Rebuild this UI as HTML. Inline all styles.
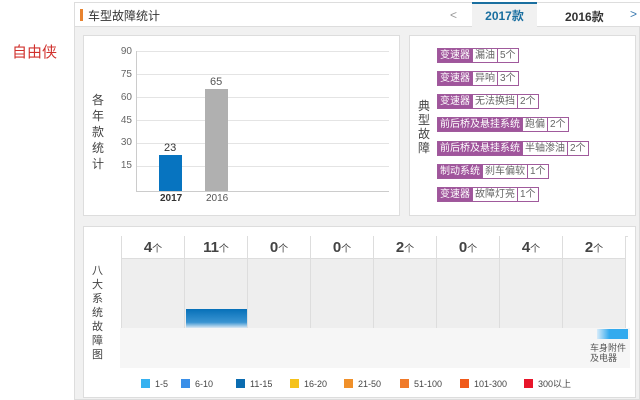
<!DOCTYPE html><html><head><meta charset="utf-8"><style>
*{margin:0;padding:0;box-sizing:border-box}
body{width:640px;height:400px;background:#fff;font-family:"Liberation Sans","Noto Sans CJK SC",sans-serif;position:relative;overflow:hidden;font-size:11px;color:#333}
.a{position:absolute}
.tag{position:absolute;left:437px;height:15px;display:flex;font-size:10px;line-height:13px}
.tag span{border:1px solid #a05a9c;padding:0 2px;background:#fff;color:#666}
.tag span.p{background:#a0559c;color:#fff}
.tag span+span{border-left:none}
.yl{position:absolute;left:112px;width:20px;text-align:right;font-size:10px;color:#666}
.gl{position:absolute;left:136px;width:253px;height:1px;background:#e4e4e4}
.col{position:absolute;top:236px;width:63px;height:132px;border-right:1px solid #ddd;background:#eee}
.col b{display:block;height:23px;background:#fff;border-bottom:1px solid #ddd;text-align:center;font-size:15px;line-height:23px;color:#444}
.col b small{font-size:10px;font-weight:normal}
.lg{position:absolute;top:379px;font-size:9px;color:#444;line-height:10px}
.lg i{display:inline-block;width:9px;height:9px;vertical-align:-1px;margin-right:5px}
</style></head><body>
<div class="a" style="left:74px;top:2px;width:566px;height:398px;background:#f1f1f1;border:1px solid #ddd"></div>
<div class="a" style="left:75px;top:3px;width:565px;height:24px;background:#fff;border-bottom:1px solid #ddd"></div>
<div class="a" style="left:80px;top:9px;width:3px;height:12px;background:#e8832f"></div>
<div class="a" style="left:88px;top:7px;font-size:12px;color:#333">车型故障统计</div>
<div class="a" style="left:12px;top:41px;font-size:15px;color:#d0312d">自由侠</div>
<div class="a" style="left:450px;top:8px;color:#999;font-size:12px">&lt;</div>
<div class="a" style="left:472px;top:2px;width:65px;height:26px;background:#f1f1f1;border-top:2px solid #1a6fa0;text-align:center;line-height:24px;font-weight:bold;color:#1a6fa0;font-size:12px">2017款</div>
<div class="a" style="left:565px;top:8px;font-weight:bold;font-size:12px;color:#333">2016款</div>
<div class="a" style="left:630px;top:7px;color:#3a7ab0;font-size:12px">&gt;</div>
<div class="a" style="left:83px;top:35px;width:317px;height:181px;background:#fff;border:1px solid #ddd"></div>
<div class="a" style="left:409px;top:35px;width:227px;height:181px;background:#fff;border:1px solid #ddd"></div>
<div class="a" style="left:83px;top:226px;width:553px;height:172px;background:#fff;border:1px solid #ddd"></div>
<div class="a" style="left:92px;top:92px;width:12px;font-size:12px;line-height:16px;color:#444">各年款统计</div>
<div class="yl" style="top:46px">90</div><div class="yl" style="top:69px">75</div><div class="yl" style="top:92px">60</div><div class="yl" style="top:115px">45</div><div class="yl" style="top:137px">30</div><div class="yl" style="top:160px">15</div>
<div class="gl" style="top:51px"></div><div class="gl" style="top:74px"></div><div class="gl" style="top:97px"></div><div class="gl" style="top:120px"></div><div class="gl" style="top:143px"></div><div class="gl" style="top:166px"></div>
<div class="a" style="left:136px;top:51px;width:1px;height:141px;background:#ccc"></div>
<div class="a" style="left:136px;top:191px;width:253px;height:1px;background:#ccc"></div>
<div class="a" style="left:159px;top:155px;width:23px;height:36px;background:#0774c0"></div>
<div class="a" style="left:205px;top:89px;width:23px;height:102px;background:#b0b0b0"></div>
<div class="a" style="left:164px;top:142px;font-size:11px">23</div>
<div class="a" style="left:210px;top:76px;font-size:11px;color:#555">65</div>
<div class="a" style="left:160px;top:193px;font-size:10px;font-weight:bold">2017</div>
<div class="a" style="left:206px;top:193px;font-size:10px;color:#555">2016</div>
<div class="a" style="left:418px;top:99px;width:12px;font-size:12px;line-height:14px;color:#444">典型故障</div>
<div class="tag" style="top:48px"><span class="p">变速器</span><span>漏油</span><span>5个</span></div>
<div class="tag" style="top:71px"><span class="p">变速器</span><span>异响</span><span>3个</span></div>
<div class="tag" style="top:94px"><span class="p">变速器</span><span>无法换挡</span><span>2个</span></div>
<div class="tag" style="top:117px"><span class="p">前后桥及悬挂系统</span><span>跑偏</span><span>2个</span></div>
<div class="tag" style="top:141px"><span class="p">前后桥及悬挂系统</span><span>半轴渗油</span><span>2个</span></div>
<div class="tag" style="top:164px"><span class="p">制动系统</span><span>刹车偏软</span><span>1个</span></div>
<div class="tag" style="top:187px"><span class="p">变速器</span><span>故障灯亮</span><span>1个</span></div>
<div class="a" style="left:92px;top:264px;width:12px;font-size:11px;line-height:14px;color:#444">八大系统故障图</div>
<div class="a" style="left:121px;top:236px;width:507px;height:132px;border:1px solid #ddd;border-right:none"></div>
<div class="col" style="left:122px"><b>4<small>个</small></b></div>
<div class="col" style="left:185px"><b>11<small>个</small></b></div>
<div class="col" style="left:248px"><b>0<small>个</small></b></div>
<div class="col" style="left:311px"><b>0<small>个</small></b></div>
<div class="col" style="left:374px"><b>2<small>个</small></b></div>
<div class="col" style="left:437px"><b>0<small>个</small></b></div>
<div class="col" style="left:500px"><b>4<small>个</small></b></div>
<div class="col" style="left:563px"><b>2<small>个</small></b></div>
<div class="a" style="left:120px;top:328px;width:510px;height:40px;background:#f6f6f6"></div>
<div class="a" style="left:186px;top:309px;width:61px;height:19px;background:linear-gradient(#0670b8,#3a94d2 70%,#dbe9f4)"></div>
<div class="a" style="left:597px;top:329px;width:31px;height:10px;background:linear-gradient(90deg,#d8ecfa,#33aaee 40%)"></div>
<div class="a" style="left:590px;top:343px;font-size:9px;color:#555;line-height:10px">车身附件<br>及电器</div>
<div class="lg" style="left:141px"><i style="background:#36b1f0"></i>1-5</div>
<div class="lg" style="left:181px"><i style="background:#3a8fe8"></i>6-10</div>
<div class="lg" style="left:236px"><i style="background:#0b6cb0"></i>11-15</div>
<div class="lg" style="left:290px"><i style="background:#f5c21c"></i>16-20</div>
<div class="lg" style="left:344px"><i style="background:#f0902a"></i>21-50</div>
<div class="lg" style="left:400px"><i style="background:#f07a2a"></i>51-100</div>
<div class="lg" style="left:460px"><i style="background:#f05a1a"></i>101-300</div>
<div class="lg" style="left:524px"><i style="background:#e8152a"></i>300以上</div>
</body></html>
